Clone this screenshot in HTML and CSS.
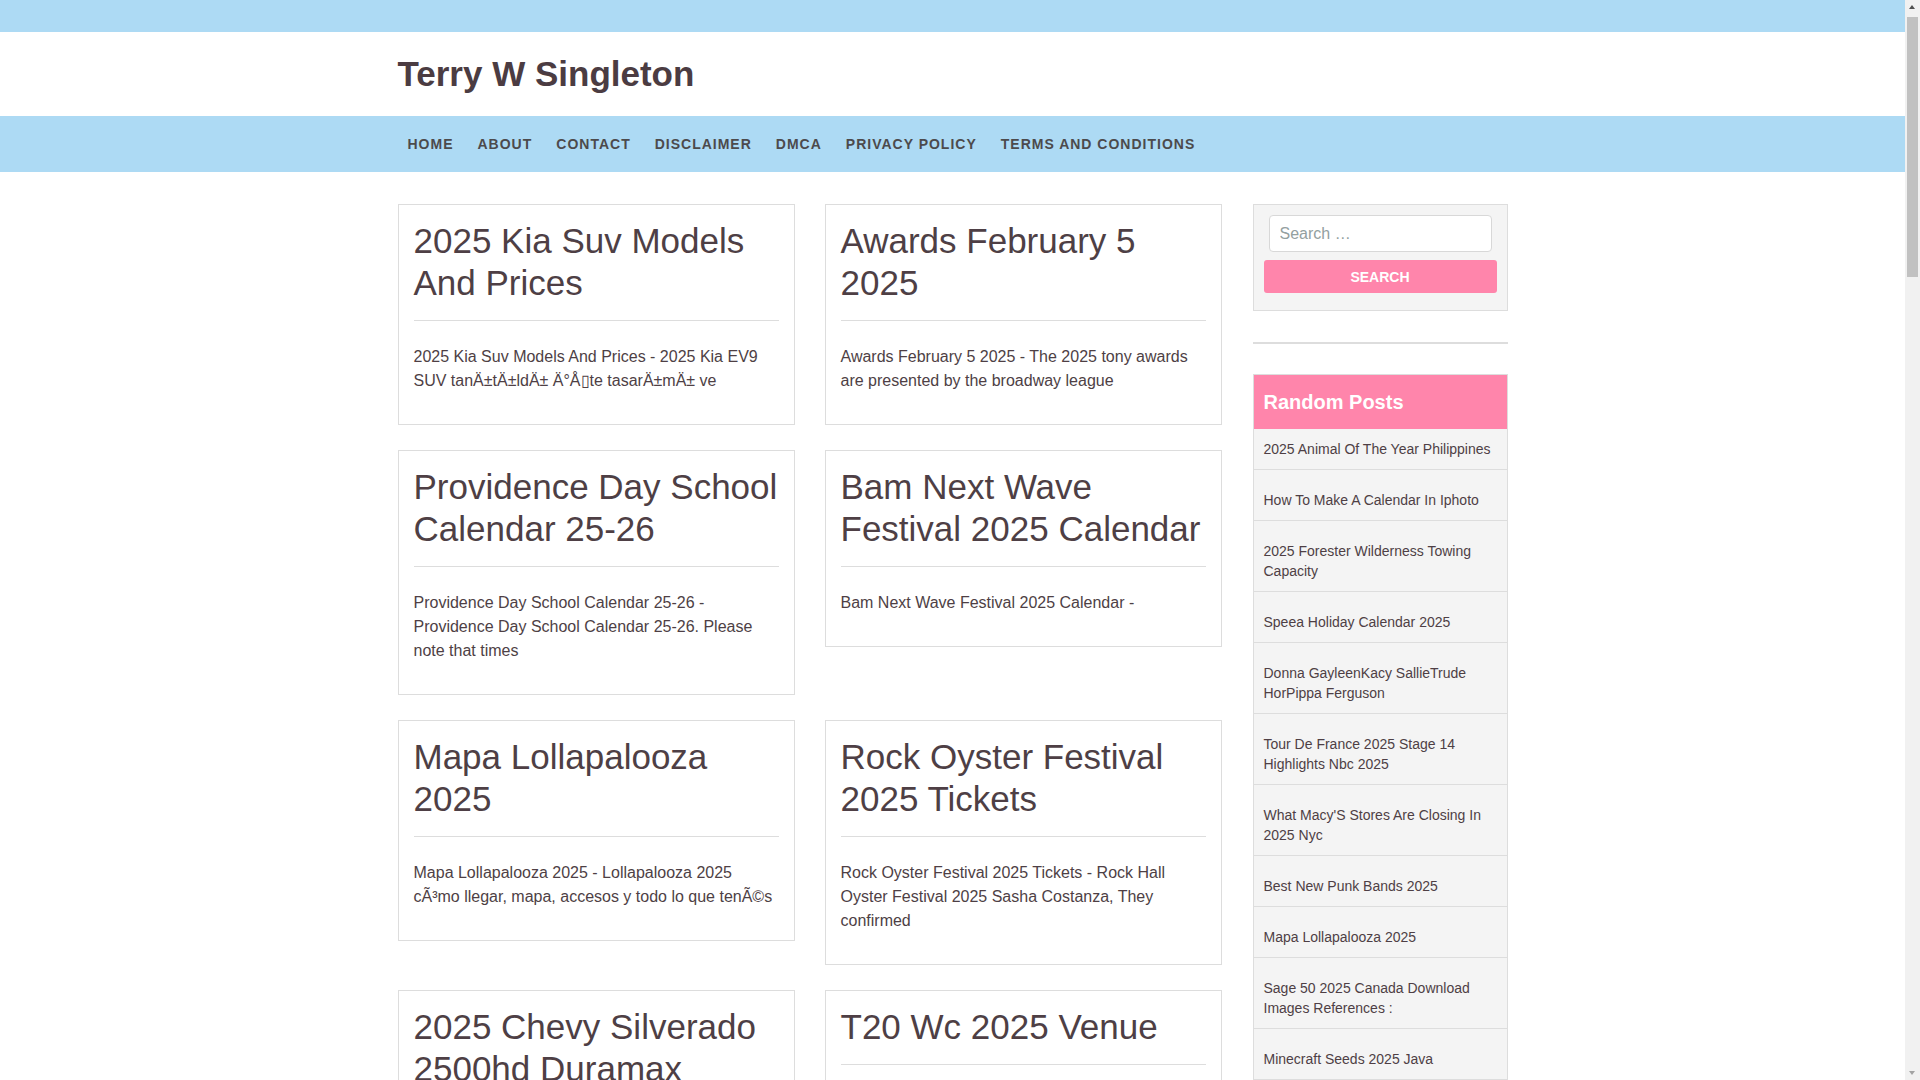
FILE: index.html
```html
<!DOCTYPE html>
<html lang="en">
<head>
<meta charset="utf-8">
<title>Terry W Singleton</title>
<link rel="stylesheet" href="styles.css">
</head>
<body>
<div class="topbar"></div>
<header class="masthead">
  <div class="container">
    <h1 class="site-title">Terry W Singleton</h1>
  </div>
</header>
<nav class="mainnav">
  <div class="container">
    <ul class="menu">
      <li><a href="#">Home</a></li>
      <li><a href="#">About</a></li>
      <li><a href="#">Contact</a></li>
      <li><a href="#">Disclaimer</a></li>
      <li><a href="#">DMCA</a></li>
      <li><a href="#">Privacy Policy</a></li>
      <li><a href="#">Terms and Conditions</a></li>
    </ul>
  </div>
</nav>
<div class="container content">
  <main class="posts">
    <article class="card">
      <h2>2025 Kia Suv Models And Prices</h2>
      <hr>
      <p>2025 Kia Suv Models And Prices - 2025 Kia EV9 SUV tanÄ±tÄ±ldÄ± Ä°Å▯te tasarÄ±mÄ± ve</p>
    </article>
    <article class="card">
      <h2>Awards February 5 2025</h2>
      <hr>
      <p>Awards February 5 2025 - The 2025 tony awards are presented by the broadway league</p>
    </article>
    <article class="card">
      <h2>Providence Day School Calendar 25-26</h2>
      <hr>
      <p>Providence Day School Calendar 25-26 - Providence Day School Calendar 25-26. Please note that times</p>
    </article>
    <article class="card">
      <h2>Bam Next Wave Festival 2025 Calendar</h2>
      <hr>
      <p>Bam Next Wave Festival 2025 Calendar -</p>
    </article>
    <article class="card">
      <h2>Mapa Lollapalooza 2025</h2>
      <hr>
      <p>Mapa Lollapalooza 2025 - Lollapalooza 2025 cÃ³mo llegar, mapa, accesos y todo lo que tenÃ©s</p>
    </article>
    <article class="card">
      <h2>Rock Oyster Festival 2025 Tickets</h2>
      <hr>
      <p>Rock Oyster Festival 2025 Tickets - Rock Hall Oyster Festival 2025 Sasha Costanza, They confirmed</p>
    </article>
    <article class="card">
      <h2>2025 Chevy Silverado 2500hd Duramax</h2>
      <hr>
      <p>2025 Chevy Silverado 2500hd Duramax - The 2025 Chevrolet Silverado 2500HD Duramax diesel</p>
    </article>
    <article class="card">
      <h2>T20 Wc 2025 Venue</h2>
      <hr>
      <p>T20 Wc 2025 Venue - The ICC Men's T20 World Cup 2025 venues</p>
    </article>
  </main>
  <aside class="sidebar">
    <div class="widget search-widget">
      <form class="search-form">
        <input class="search-field" type="search" placeholder="Search …">
        <button class="search-submit" type="button">Search</button>
      </form>
    </div>
    <div class="sidebar-sep"></div>
    <div class="widget random-widget">
      <h3 class="widget-title">Random Posts</h3>
      <ul class="random-list">
        <li><a href="#">2025 Animal Of The Year Philippines</a></li>
        <li><a href="#">How To Make A Calendar In Iphoto</a></li>
        <li><a href="#">2025 Forester Wilderness Towing Capacity</a></li>
        <li><a href="#">Speea Holiday Calendar 2025</a></li>
        <li><a href="#">Donna GayleenKacy SallieTrude HorPippa Ferguson</a></li>
        <li><a href="#">Tour De France 2025 Stage 14 Highlights Nbc 2025</a></li>
        <li><a href="#">What Macy'S Stores Are Closing In 2025 Nyc</a></li>
        <li><a href="#">Best New Punk Bands 2025</a></li>
        <li><a href="#">Mapa Lollapalooza 2025</a></li>
        <li><a href="#">Sage 50 2025 Canada Download Images References :</a></li>
        <li><a href="#">Minecraft Seeds 2025 Java</a></li>
      </ul>
    </div>
  </aside>
</div>
<div class="fake-scrollbar" aria-hidden="true">
  <div class="sb-arrow sb-up"></div>
  <div class="sb-track"><div class="sb-thumb"></div></div>
  <div class="sb-arrow sb-down"></div>
</div>
</body>
</html>
```

FILE: styles.css
```css
* { box-sizing: border-box; }
html, body { margin: 0; padding: 0; }
body {
  font-family: "Liberation Sans", Arial, sans-serif;
  color: #4e3f45;
  background: #fff;
}
.container {
  width: 1110px;
  margin-left: calc(50vw - 562.5px);
}
.topbar {
  height: 32px;
  background: #addaf4;
}
.masthead {
  height: 84px;
  display: flex;
  align-items: center;
}
.site-title {
  margin: 0;
  font-size: 35px;
  font-weight: bold;
  line-height: 1.15;
  color: #4b3c42;
}
.mainnav {
  background: #addaf4;
}
.menu {
  list-style: none;
  margin: 0;
  padding: 0;
  height: 56px;
  display: flex;
  align-items: center;
  gap: 4px;
}
.menu a {
  display: block;
  padding: 0 10px;
  font-size: 14px;
  font-weight: bold;
  letter-spacing: 1px;
  text-transform: uppercase;
  color: #4c4a4c;
  text-decoration: none;
}
.content {
  display: grid;
  grid-template-columns: 824px 256px;
  column-gap: 30px;
  margin-top: 32px;
  margin-bottom: 40px;
  align-items: start;
}
.posts {
  display: grid;
  grid-template-columns: 397px 397px;
  column-gap: 30px;
  row-gap: 25px;
  align-items: start;
}
.card {
  border: 1px solid #dddddd;
  padding: 15px;
  background: #fff;
}
.card h2 {
  margin: 0;
  font-size: 35px;
  line-height: 42px;
  font-weight: normal;
}
.card hr {
  border: 0;
  border-top: 1px solid #dddddd;
  margin: 16px 0 24px;
  height: 0;
}
.card p {
  margin: 0 0 16px;
  font-size: 16px;
  line-height: 24px;
}
.sidebar {
  padding-left: 1px;
}
.search-widget {
  border: 1px solid #dddddd;
  background: #f4f4f4;
  padding: 10px 10px 17px;
}
.search-field {
  display: block;
  width: calc(100% - 10px);
  margin: 0 5px;
  height: 37px;
  border: 1px solid #d8d8d8;
  border-radius: 4px;
  background: #fff;
  padding: 0 10px;
  font-family: "Liberation Sans", Arial, sans-serif;
  font-size: 16px;
  color: #4e3f45;
  outline: none;
}
.search-field::placeholder {
  color: #93a0a0;
}
.search-submit {
  display: block;
  width: 100%;
  height: 33px;
  margin-top: 8px;
  border: 0;
  border-radius: 3px;
  background: #ff85ab;
  color: #fff;
  font-family: "Liberation Sans", Arial, sans-serif;
  font-size: 14px;
  font-weight: bold;
  text-transform: uppercase;
}
.sidebar-sep {
  height: 2px;
  background: #dddddd;
  margin: 31px 0 30px;
}
.random-widget {
  border: 1px solid #dddddd;
}
.widget-title {
  margin: 0;
  background: #ff85ab;
  color: #fff;
  font-size: 20px;
  line-height: 24px;
  font-weight: bold;
  padding: 15px 10px;
}
.random-list {
  list-style: none;
  margin: 0;
  padding: 0;
  background: #f4f4f4;
}
.random-list li {
  padding: 20px 10px 10px;
  border-bottom: 1px solid #dddddd;
  font-size: 14px;
  line-height: 20px;
}
.random-list li:first-child {
  padding-top: 10px;
}
.random-list a {
  color: #4e3f45;
  text-decoration: none;
}

/* imitation of the browser's vertical scrollbar seen in the screenshot */
.fake-scrollbar {
  position: fixed;
  top: 0;
  right: 0;
  width: 15px;
  height: 100vh;
  background: #f1f1f1;
  display: flex;
  flex-direction: column;
  z-index: 10;
}
.sb-arrow {
  height: 15px;
  flex: none;
  position: relative;
}
.sb-arrow::after {
  content: "";
  position: absolute;
  left: 4px;
  width: 0;
  height: 0;
  border-left: 3.5px solid transparent;
  border-right: 3.5px solid transparent;
}
.sb-up::after {
  top: 5px;
  border-bottom: 4px solid #505050;
}
.sb-down::after {
  top: 6px;
  border-top: 4px solid #a3a3a3;
}
.sb-track {
  flex: 1;
  padding: 2px 2px;
}
.sb-thumb {
  height: 260px;
  background: #c1c1c1;
}
```
